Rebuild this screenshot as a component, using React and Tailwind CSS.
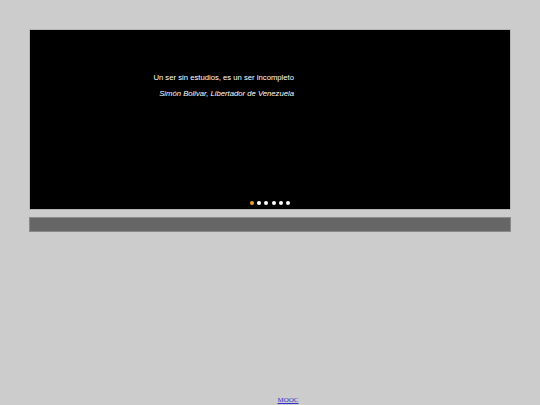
export default function App() {
  const dots = [0, 1, 2, 3, 4, 5];
  return (
    <div className="flex h-[405px] w-[540px] flex-col overflow-hidden bg-[#cccccc] px-[29px] pt-[29px]" style={{ fontFamily: '"Liberation Sans", Arial, sans-serif' }}>
      {/* slider */}
      <div className="flex h-[181px] flex-col border border-[#b5b5b5] bg-black">
        <div className="w-[264px] pt-[43px] text-right text-[7.7px] leading-[9px] text-white">
          <p>Un ser sin estudios, es un ser incompleto</p>
          <p className="mt-[7px] italic">Simón Bolivar, Libertador de Venezuela</p>
        </div>
        <div className="mt-auto flex justify-center gap-[3.4px] pb-[4px]">
          {dots.map((d) => (
            <span
              key={d}
              className={`block h-[4px] w-[4px] rounded-full ${d === 0 ? 'bg-[#f0a030]' : 'bg-white'}`}
            />
          ))}
        </div>
      </div>

      {/* bar */}
      <div className="mt-[7px] h-[15px] border border-[#8a8a8a] bg-[#666666]" />

      <div className="mt-auto flex justify-center pb-[1px] pl-[36px]">
        <a href="#" className="text-[7px] leading-[8px] text-[#3333cc] underline" style={{ fontFamily: '"Liberation Serif", "Times New Roman", serif' }}>
          MOOC
        </a>
      </div>
    </div>
  );
}
